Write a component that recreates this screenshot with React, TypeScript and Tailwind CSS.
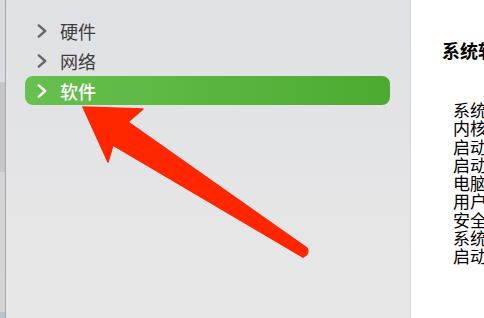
import React from "react";

const font = { fontFamily: '"Noto Sans CJK SC", "Noto Sans", sans-serif' };

function Chevron({ color }: { color: string }) {
  return (
    <svg width="10" height="14" viewBox="0 0 10 14" fill="none">
      <path d="M1.8 1.4 L8.2 7 L1.8 12.6" stroke={color} strokeWidth="2.4" strokeLinecap="round" strokeLinejoin="round" />
    </svg>
  );
}

const items = [
  { label: "硬件", active: false },
  { label: "网络", active: false },
  { label: "软件", active: true },
];

const lines = ["系统版本：", "内核版本：", "启动宗卷：", "启动模式：", "电脑名称：", "用户名：", "安全虚拟内存：", "系统完整性保护：", "启动以来的时间："];

export default function App() {
  return (
    <div className="relative flex h-[318px] w-[484px] overflow-hidden" style={font}>
      {/* window edge */}
      <div className="flex w-[6px] shrink-0 flex-col border-r border-[#a8a8a8]">
        <div className="h-[82px] bg-[#d9dce1]" />
        <div className="h-[90px] bg-[#c6c6c6]" />
        <div className="flex-1 bg-[#d4d4d4]" />
        <div className="h-[6px] bg-[#b7c3cb]" />
      </div>

      {/* sidebar */}
      <div className="flex w-[405px] shrink-0 flex-col gap-[1px] border-r border-[#d6d6d6] bg-gradient-to-b from-[#e0e1e4] to-[#e7e7e7] pt-[16px]">
        {items.map((it) => (
          <div
            key={it.label}
            className={
              it.active
                ? "ml-[19px] mr-[20px] flex h-[29px] items-center rounded-[8px] bg-gradient-to-r from-[#67c04f] to-[#4caa30] pl-[12px]"
                : "ml-[19px] mr-[20px] flex h-[29px] items-center pl-[12px]"
            }
          >
            <Chevron color={it.active ? "#ffffff" : "#676767"} />
            <span
              className={
                it.active
                  ? "ml-[13px] text-[18px] font-medium leading-none text-white"
                  : "ml-[13px] text-[18px] leading-none text-[#3d3d3d]"
              }
            >
              {it.label}
            </span>
          </div>
        ))}
      </div>

      {/* content */}
      <div className="min-w-0 flex-1 overflow-hidden bg-white pl-[31px] pt-[40px]">
        <div className="whitespace-nowrap text-[18px] font-bold leading-[20px] text-black">系统软件概览：</div>
        <div className="mt-[41px] pl-[11px]">
          {lines.map((l) => (
            <div key={l} className="whitespace-nowrap text-[17px] leading-[18.3px] text-black">
              {l}
            </div>
          ))}
        </div>
      </div>

      {/* annotation arrow */}
      <svg className="pointer-events-none absolute left-0 top-0" width="484" height="318" viewBox="0 0 484 318">
        <path
          d="M83 107 L143 109 L128 122 L307 248 Q310 254 303 257 L113 145 L108 162 Z"
          fill="#ff2600"
          stroke="#ff2600"
          strokeWidth="1.5"
          strokeLinejoin="round"
        />
      </svg>
    </div>
  );
}
